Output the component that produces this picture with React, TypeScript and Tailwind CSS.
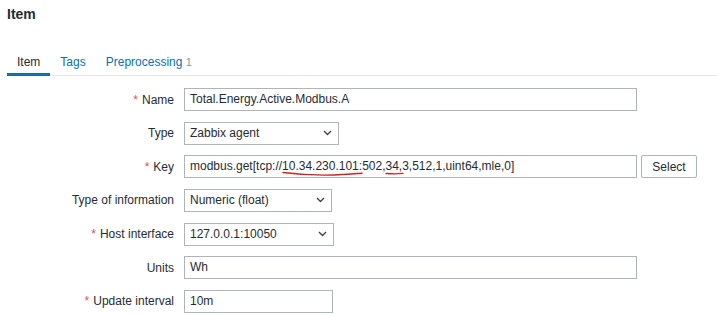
import React from "react"

// Zabbix-style "Item" edit form

const inputCls =
  "h-[23px] border border-[#aeb4b7] bg-white px-[5px] text-[12px] leading-[21px] text-[#1f2c33]"

function Chevron() {
  return (
    <svg width={9} height={6} viewBox="0 0 9 6" fill="none" className="absolute right-[6px] top-1/2 -translate-y-1/2 text-[#3a464d]">
      <path d="M1 1L4.5 4.5L8 1" stroke="currentColor" strokeWidth={1.4} />
    </svg>
  )
}

function Label({ text, required }: { text: string; required?: boolean }) {
  return (
    <div className="flex h-[23px] items-center justify-end text-[12px] text-[#1f2c33]">
      {required && <span className="mr-[4px] text-[#e0524f]">*</span>}
      {text}
    </div>
  )
}

function Select({ value, width }: { value: string; width: string }) {
  return (
    <div className={`relative ${inputCls} ${width}`}>
      <span>{value}</span>
      <Chevron />
    </div>
  )
}

export default function App() {
  return (
    <div className="h-[316px] w-[717px] bg-white pl-[7px] pt-[6px] font-['Liberation_Sans',Arial,sans-serif] text-[#1f2c33]">
      {/* Title */}
      <h1 className="text-[14px] font-bold leading-4 text-[#1f2c33]">Item</h1>

      {/* Tabs */}
      <div className="mt-[33px] flex border-b border-[#e4e8ea] text-[12px] leading-[14px]">
        <div className="-mb-px border-b-[3px] border-[#1b6ca5] px-[10px] pb-[4px] text-[#1f2c33]">Item</div>
        <div className="-mb-px px-[10px] pb-[4px] text-[#0b6fae]">Tags</div>
        <div className="-mb-px px-[10px] pb-[4px] text-[#0b6fae]">
          Preprocessing <span className="text-[11px] text-[#8a9aa2]">1</span>
        </div>
      </div>

      {/* Form */}
      <div className="-ml-[7px] mt-[12px] grid grid-cols-[174px_auto] gap-x-[10px] gap-y-[10.67px]">
        <Label text="Name" required />
        <div className={`${inputCls} w-[453px]`}>Total.Energy.Active.Modbus.A</div>

        <Label text="Type" />
        <Select value="Zabbix agent" width="w-[155px]" />

        <Label text="Key" required />
        <div className="flex items-center">
          <div className={`relative ${inputCls} w-[453px]`}>
            modbus.get[tcp://10.34.230.101:502,34,3,512,1,uint64,mle,0]
            {/* hand-drawn red annotation */}
            <svg width={453} height={23} viewBox="0 0 453 23" fill="none" className="pointer-events-none absolute left-[-1px] top-[-1px]">
              <path d="M99 17.5C115 19.5 135 20.5 150 20C162 19.6 172 18.8 178 18.3" stroke="#d61f1f" strokeWidth={1.4} strokeLinecap="round" />
              <path d="M202 18.5C208 19 214 19 219 18.4" stroke="#d61f1f" strokeWidth={1.4} strokeLinecap="round" />
            </svg>
          </div>
          <button
            type="button"
            className="ml-[4px] h-[23px] w-[56px] rounded-[2px] border border-[#aeb4b7] bg-white text-[12px] text-[#1f2c33]"
          >
            Select
          </button>
        </div>

        <Label text="Type of information" />
        <Select value="Numeric (float)" width="w-[148px]" />

        <Label text="Host interface" required />
        <Select value="127.0.0.1:10050" width="w-[150px]" />

        <Label text="Units" />
        <div className={`${inputCls} w-[453px]`}>Wh</div>

        <Label text="Update interval" required />
        <div className={`${inputCls} w-[149px]`}>10m</div>
      </div>
    </div>
  )
}
